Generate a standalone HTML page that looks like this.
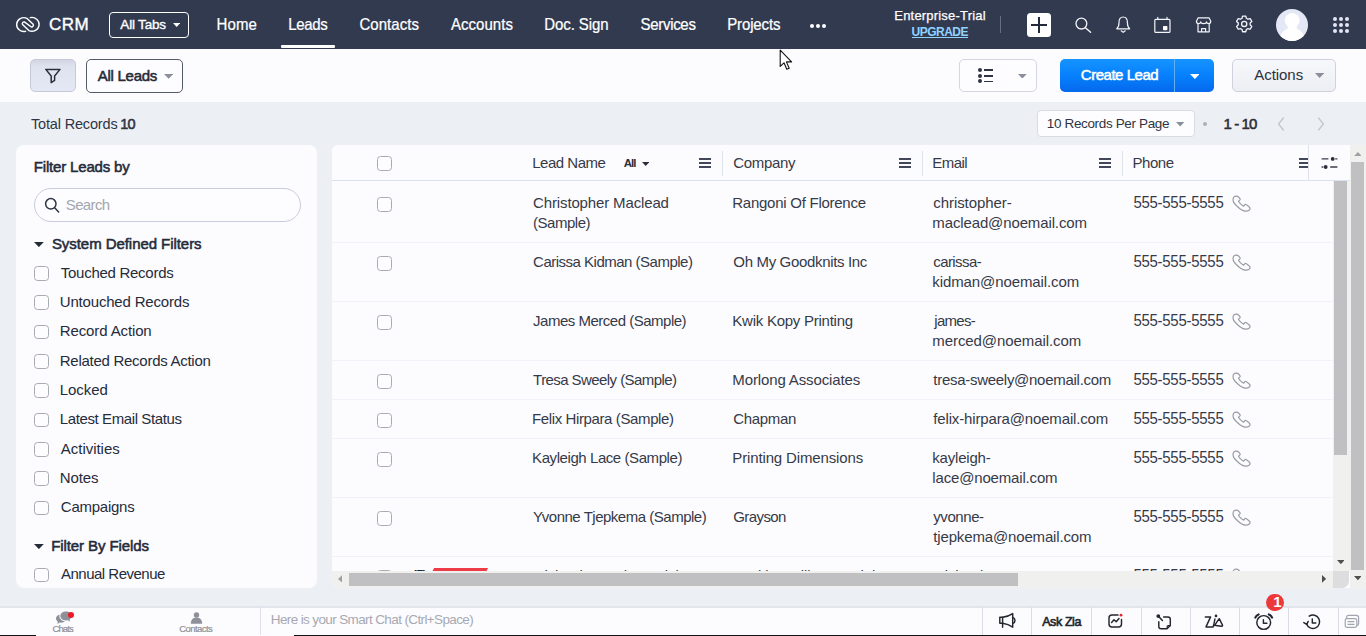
<!DOCTYPE html>
<html lang="en">
<head>
<meta charset="utf-8">
<title>Leads - Zoho CRM</title>
<style>
*{box-sizing:border-box;margin:0;padding:0}
html,body{width:1366px;height:636px;overflow:hidden}
body{position:relative;background:#ecf0f4;font-family:"Liberation Sans",sans-serif;color:#333845}
.a{position:absolute}
.t{position:absolute;white-space:pre;line-height:20px;font-family:"Liberation Sans",sans-serif}
.nav{left:0;top:0;width:1366px;height:49px;background:#323a4f}
.bar{left:0;top:49px;width:1366px;height:53px;background:#fcfcff}
.panel{background:#fcfcff;border-radius:8px}
.cb{position:absolute;width:14.6px;height:14.8px;border:1.5px solid #a9abb3;border-radius:3.5px;background:#fdfdff}
.hl{position:absolute;left:332px;width:1002px;height:1px;background:#f1f2f9}
.ham{position:absolute;width:12px;height:10px;border-top:2px solid #43475a;border-bottom:2px solid #43475a}
.ham:after{content:"";position:absolute;left:0;right:0;top:2px;height:2px;background:#43475a}
.sep{position:absolute;width:1px;top:151px;height:25px;background:#dfe3ea}
.bd{position:absolute;top:607px;width:1px;height:28px;background:#d9dbe6}
</style>
</head>
<body>
<div class="a nav"></div>
<svg class="a" style="left:9.2px;top:10px" width="42" height="30" viewBox="0 0 40 30" preserveAspectRatio="none" fill="none" stroke="#fff" stroke-width="1.35" stroke-linecap="round" stroke-linejoin="round"><path d="M15.8 21.3 A6.9 6.9 0 1 1 17.0 8.3 L23.0 14.2 A1.9 1.9 0 0 1 21.3 17.0 L14.6 11.9 A1.8 1.8 0 0 0 12.9 14.6 L18.9 20.6 A6.9 6.9 0 1 0 20.3 7.6"/></svg>
<span class="t" style="left:49.00px;top:14.81px;font-size:17px;color:#fff;letter-spacing:0.523px;-webkit-text-stroke:0.4px #fff;">CRM</span>
<div class="a" style="left:109px;top:12px;width:80px;height:26px;border:1.25px solid #fff;border-radius:4px"></div>
<span class="t" style="left:120.30px;top:15.22px;font-size:13.5px;color:#fff;letter-spacing:-0.174px;-webkit-text-stroke:0.35px #fff;">All Tabs</span>
<svg class="a" style="left:173px;top:23.2px" width="7.3" height="3.9" viewBox="0 0 7.3 3.9"><polygon points="0,0 7.3,0 3.65,3.9" fill="#fff"/></svg>
<span class="t" style="left:216.60px;top:14.70px;font-size:15px;color:#fff;letter-spacing:0.110px;-webkit-text-stroke:0.22px #fff;transform:scaleY(1.08);transform-origin:0 15.2px;">Home</span>
<span class="t" style="left:288.30px;top:14.70px;font-size:15px;color:#fff;letter-spacing:-0.342px;-webkit-text-stroke:0.22px #fff;transform:scaleY(1.08);transform-origin:0 15.2px;">Leads</span>
<span class="t" style="left:359.50px;top:14.70px;font-size:15px;color:#fff;letter-spacing:0.029px;-webkit-text-stroke:0.22px #fff;transform:scaleY(1.08);transform-origin:0 15.2px;">Contacts</span>
<span class="t" style="left:450.90px;top:14.70px;font-size:15px;color:#fff;letter-spacing:0.057px;-webkit-text-stroke:0.22px #fff;transform:scaleY(1.08);transform-origin:0 15.2px;">Accounts</span>
<span class="t" style="left:544.20px;top:14.70px;font-size:15px;color:#fff;letter-spacing:-0.074px;-webkit-text-stroke:0.22px #fff;transform:scaleY(1.08);transform-origin:0 15.2px;">Doc. Sign</span>
<span class="t" style="left:640.50px;top:14.70px;font-size:15px;color:#fff;letter-spacing:-0.302px;-webkit-text-stroke:0.22px #fff;transform:scaleY(1.08);transform-origin:0 15.2px;">Services</span>
<span class="t" style="left:727.20px;top:14.70px;font-size:15px;color:#fff;letter-spacing:-0.126px;-webkit-text-stroke:0.22px #fff;transform:scaleY(1.08);transform-origin:0 15.2px;">Projects</span>
<div class="a" style="left:281px;top:45px;width:54px;height:3px;background:#fff;border-radius:1px"></div>
<div class="a" style="left:810px;top:23.5px;width:4px;height:4px;border-radius:50%;background:#fff"></div>
<div class="a" style="left:816px;top:23.5px;width:4px;height:4px;border-radius:50%;background:#fff"></div>
<div class="a" style="left:822px;top:23.5px;width:4px;height:4px;border-radius:50%;background:#fff"></div>
<span class="t" style="left:894.30px;top:6.30px;font-size:13px;color:#fff;letter-spacing:0.194px;-webkit-text-stroke:0.25px #fff;">Enterprise-Trial</span>
<span class="t" style="left:911.60px;top:21.64px;font-size:12px;color:#8fd3ff;font-weight:700;letter-spacing:-0.534px;">UPGRADE</span>
<div class="a" style="left:911.5px;top:37px;width:56.5px;height:1.2px;background:#8fd3ff"></div>
<div class="a" style="left:999.5px;top:16px;width:1px;height:17px;background:#677083"></div>
<div class="a" style="left:1026.5px;top:12.5px;width:24px;height:24px;background:#fff;border-radius:3.5px"></div>
<div class="a" style="left:1030.5px;top:23.5px;width:16px;height:2px;background:#262b3b"></div><div class="a" style="left:1037.5px;top:16.5px;width:2px;height:16px;background:#262b3b"></div>
<svg class="a" style="left:0;top:0" width="1366" height="49" viewBox="0 0 1366 49" fill="none" stroke="#f4f5fa" stroke-width="1.2" stroke-linecap="round" stroke-linejoin="round"><circle cx="1081.4" cy="23.6" r="5.4" stroke-width="1.3"/><path d="M1085.4 27.8 L1090.6 32.2" stroke-width="1.4"/><path d="M1116.8 28.8 C1118.6 27.2 1119 25.6 1119 22.4 C1119 19.2 1120.6 17 1123.2 17 C1125.8 17 1127.4 19.2 1127.4 22.4 C1127.4 25.6 1127.8 27.2 1129.6 28.8 Z"/><path d="M1121.2 30.8 L1123.2 32.4 L1125.2 30.8"/><rect x="1154.8" y="19.4" width="15.2" height="13" rx="1"/><path d="M1157.8 17.4 V19.2 M1167 17.4 V19.2"/><rect x="1163" y="26" width="4.4" height="4.2" rx="0.8" fill="#fff" stroke="none"/><path d="M1198 24.4 V31.8 H1209.2 V24.4"/><path d="M1198.2 17.8 H1209 L1210.8 21.2 C1210.8 22.6 1209.8 23.6 1208.6 23.6 C1207.4 23.6 1206.5 22.8 1206.5 21.8 C1206.5 22.8 1205 23.6 1203.6 23.6 C1202.2 23.6 1200.7 22.8 1200.7 21.8 C1200.7 22.8 1199.8 23.6 1198.6 23.6 C1197.4 23.6 1196.4 22.6 1196.4 21.2 Z"/><path d="M1201.6 31.6 V28.6 H1205.6 V31.6"/><path d="M1242.54 16.07 L1245.86 16.07 L1246.35 18.30 L1247.98 19.24 L1250.15 18.55 L1251.81 21.43 L1250.13 22.96 L1250.13 24.84 L1251.81 26.37 L1250.15 29.25 L1247.98 28.56 L1246.35 29.50 L1245.86 31.73 L1242.54 31.73 L1242.05 29.50 L1240.42 28.56 L1238.25 29.25 L1236.59 26.37 L1238.27 24.84 L1238.27 22.96 L1236.59 21.43 L1238.25 18.55 L1240.42 19.24 L1242.05 18.30 Z" stroke-width="1.3"/><circle cx="1244.2" cy="23.9" r="2.6" stroke-width="1.3"/></svg>
<svg class="a" style="left:1276px;top:9px" width="32" height="32" viewBox="0 0 32 32"><defs><clipPath id="av"><circle cx="16" cy="16" r="16"/></clipPath></defs><circle cx="16" cy="16" r="16" fill="#e4e7f5"/><g clip-path="url(#av)" fill="#fff"><circle cx="16.2" cy="11.4" r="7.4"/><path d="M11.6 15 H20.8 V20 C25.6 21.4 28.8 25 28.8 33 H3.6 C3.6 25 6.8 21.4 11.6 20 Z"/></g></svg>
<div class="a" style="left:1332.8px;top:17px;width:4.2px;height:4.2px;border-radius:50%;background:#e4e6f6"></div>
<div class="a" style="left:1338.8999999999999px;top:17px;width:4.2px;height:4.2px;border-radius:50%;background:#e4e6f6"></div>
<div class="a" style="left:1345.0px;top:17px;width:4.2px;height:4.2px;border-radius:50%;background:#e4e6f6"></div>
<div class="a" style="left:1332.8px;top:23px;width:4.2px;height:4.2px;border-radius:50%;background:#e4e6f6"></div>
<div class="a" style="left:1338.8999999999999px;top:23px;width:4.2px;height:4.2px;border-radius:50%;background:#e4e6f6"></div>
<div class="a" style="left:1345.0px;top:23px;width:4.2px;height:4.2px;border-radius:50%;background:#e4e6f6"></div>
<div class="a" style="left:1332.8px;top:29px;width:4.2px;height:4.2px;border-radius:50%;background:#e4e6f6"></div>
<div class="a" style="left:1338.8999999999999px;top:29px;width:4.2px;height:4.2px;border-radius:50%;background:#e4e6f6"></div>
<div class="a" style="left:1345.0px;top:29px;width:4.2px;height:4.2px;border-radius:50%;background:#e4e6f6"></div>
<div class="a bar"></div>
<div class="a" style="left:30px;top:59px;width:46px;height:33px;background:linear-gradient(#d3d6e2,#dfe2ef 22%,#e4e7f4);border:1px solid #c6cad8;border-radius:5px"></div>
<svg class="a" style="left:44px;top:68px" width="18" height="16" viewBox="0 0 18 16" fill="none" stroke="#2a2e3a" stroke-width="1.5" stroke-linejoin="round"><path d="M1.8 1.4 H16 L10.6 8 V12.4 L7.2 14.6 V8 Z"/></svg>
<div class="a" style="left:86px;top:59px;width:97px;height:34px;background:#fdfdff;border:1px solid #555a6b;border-radius:5px"></div>
<span class="t" style="left:97.80px;top:65.50px;font-size:15px;color:#272b38;letter-spacing:-0.276px;-webkit-text-stroke:0.55px #272b38;">All Leads</span>
<svg class="a" style="left:163.9px;top:74.1px" width="9.3" height="4.7" viewBox="0 0 9.3 4.7"><polygon points="0,0 9.3,0 4.65,4.7" fill="#8b8f9c"/></svg>
<div class="a" style="left:959px;top:59px;width:78px;height:33px;background:#fdfdff;border:1px solid #d3d6e0;border-radius:5px"></div>
<div class="a" style="left:978px;top:68.10px;width:4px;height:4px;border-radius:50%;background:#2f3444"></div><div class="a" style="left:984px;top:69.30px;width:9.2px;height:1.6px;background:#2f3444"></div>
<div class="a" style="left:978px;top:73.75px;width:4px;height:4px;border-radius:50%;background:#2f3444"></div><div class="a" style="left:984px;top:74.95px;width:9.2px;height:1.6px;background:#2f3444"></div>
<div class="a" style="left:978px;top:79.40px;width:4px;height:4px;border-radius:50%;background:#2f3444"></div><div class="a" style="left:984px;top:80.60px;width:9.2px;height:1.6px;background:#2f3444"></div>
<svg class="a" style="left:1018.3px;top:73.9px" width="8.7" height="4.6" viewBox="0 0 8.7 4.6"><polygon points="0,0 8.7,0 4.35,4.6" fill="#8b8f9c"/></svg>
<div class="a" style="left:1060px;top:59px;width:154px;height:33px;background:linear-gradient(#1694ff,#0680fc 50%,#0569ec);border-radius:5px"></div>
<div class="a" style="left:1174px;top:59px;width:1px;height:33px;background:#5fb0f5"></div>
<span class="t" style="left:1080.80px;top:64.80px;font-size:15px;color:#fff;letter-spacing:-0.472px;-webkit-text-stroke:0.5px #fff;">Create Lead</span>
<svg class="a" style="left:1189.6px;top:73.9px" width="9.7" height="5.0" viewBox="0 0 9.7 5.0"><polygon points="0,0 9.7,0 4.85,5.0" fill="#fff"/></svg>
<div class="a" style="left:1232px;top:59px;width:104px;height:33px;background:linear-gradient(#f7f8fb,#eceef4);border:1px solid #cfd2dc;border-radius:5px"></div>
<span class="t" style="left:1254.20px;top:64.70px;font-size:15px;color:#2c303d;letter-spacing:-0.032px;">Actions</span>
<svg class="a" style="left:1314.7px;top:72.9px" width="9.3" height="5.0" viewBox="0 0 9.3 5.0"><polygon points="0,0 9.3,0 4.65,5.0" fill="#8b8f9c"/></svg>
<span class="t" style="left:31.00px;top:113.68px;font-size:14.5px;color:#2f3444;letter-spacing:-0.167px;">Total Records</span>
<span class="t" style="left:120.20px;top:113.68px;font-size:14.5px;color:#2f3444;letter-spacing:-0.764px;-webkit-text-stroke:0.55px #2f3444;">10</span>
<div class="a" style="left:1036.5px;top:110px;width:158px;height:27px;background:#fdfdff;border:1px solid #d8dbe4;border-radius:4px"></div>
<span class="t" style="left:1046.80px;top:113.52px;font-size:13.5px;color:#2f3444;letter-spacing:-0.354px;">10 Records Per Page</span>
<svg class="a" style="left:1176.4px;top:122.0px" width="8.4" height="4.5" viewBox="0 0 8.4 4.5"><polygon points="0,0 8.4,0 4.2,4.5" fill="#8b8f9c"/></svg>
<div class="a" style="left:1203.2px;top:122.2px;width:4px;height:4px;border-radius:50%;background:#adb0ba"></div>
<span class="t" style="left:1223.40px;top:113.70px;font-size:15px;color:#2a2e3a;letter-spacing:-0.883px;-webkit-text-stroke:0.55px #2a2e3a;">1 - 10</span>
<svg class="a" style="left:1276px;top:116px" width="10" height="16" viewBox="0 0 10 16" fill="none" stroke="#c4c7cf" stroke-width="1.4" stroke-linecap="round" stroke-linejoin="round"><path d="M7.4 2 L2.6 8 L7.4 14"/></svg>
<svg class="a" style="left:1316px;top:116px" width="10" height="16" viewBox="0 0 10 16" fill="none" stroke="#c4c7cf" stroke-width="1.4" stroke-linecap="round" stroke-linejoin="round"><path d="M2.6 2 L7.4 8 L2.6 14"/></svg>
<div class="a panel" style="left:16px;top:145px;width:300.5px;height:442.5px"></div>
<span class="t" style="left:33.80px;top:156.80px;font-size:15px;color:#262b3a;letter-spacing:-0.170px;-webkit-text-stroke:0.55px #262b3a;">Filter Leads by</span>
<div class="a" style="left:34px;top:188px;width:267px;height:34px;border:1px solid #c9ccdc;border-radius:17px;background:#fdfdff"></div>
<svg class="a" style="left:43.2px;top:195.9px" width="18" height="18" viewBox="0 0 18 18" fill="none" stroke="#2f3444" stroke-width="1.5" stroke-linecap="round"><circle cx="7.8" cy="7.8" r="5.2"/><path d="M11.7 11.8 L15.6 15.9"/></svg>
<span class="t" style="left:65.80px;top:194.90px;font-size:15px;color:#a4a6ae;letter-spacing:-0.637px;">Search</span>
<svg class="a" style="left:34.1px;top:242.1px" width="9.8" height="5.1" viewBox="0 0 9.8 5.1"><polygon points="0,0 9.8,0 4.9,5.1" fill="#262b3a"/></svg>
<span class="t" style="left:51.90px;top:233.90px;font-size:15px;color:#262b3a;letter-spacing:-0.056px;-webkit-text-stroke:0.55px #262b3a;">System Defined Filters</span>
<div class="cb" style="left:34px;top:266.0px"></div>
<span class="t" style="left:60.80px;top:262.80px;font-size:15px;color:#262b3a;letter-spacing:-0.274px;">Touched Records</span>
<div class="cb" style="left:34px;top:295.3px"></div>
<span class="t" style="left:59.80px;top:292.13px;font-size:15px;color:#262b3a;letter-spacing:-0.186px;">Untouched Records</span>
<div class="cb" style="left:34px;top:324.7px"></div>
<span class="t" style="left:59.80px;top:321.46px;font-size:15px;color:#262b3a;letter-spacing:-0.122px;">Record Action</span>
<div class="cb" style="left:34px;top:354.0px"></div>
<span class="t" style="left:59.80px;top:350.79px;font-size:15px;color:#262b3a;letter-spacing:-0.273px;">Related Records Action</span>
<div class="cb" style="left:34px;top:383.3px"></div>
<span class="t" style="left:59.80px;top:380.12px;font-size:15px;color:#262b3a;letter-spacing:-0.065px;">Locked</span>
<div class="cb" style="left:34px;top:412.6px"></div>
<span class="t" style="left:59.80px;top:409.45px;font-size:15px;color:#262b3a;letter-spacing:-0.396px;">Latest Email Status</span>
<div class="cb" style="left:34px;top:442.0px"></div>
<span class="t" style="left:60.80px;top:438.78px;font-size:15px;color:#262b3a;letter-spacing:-0.031px;">Activities</span>
<div class="cb" style="left:34px;top:471.3px"></div>
<span class="t" style="left:59.80px;top:468.11px;font-size:15px;color:#262b3a;letter-spacing:-0.121px;">Notes</span>
<div class="cb" style="left:34px;top:500.6px"></div>
<span class="t" style="left:60.80px;top:497.44px;font-size:15px;color:#262b3a;letter-spacing:-0.246px;">Campaigns</span>
<svg class="a" style="left:34.1px;top:543.8px" width="9.8" height="5.1" viewBox="0 0 9.8 5.1"><polygon points="0,0 9.8,0 4.9,5.1" fill="#262b3a"/></svg>
<span class="t" style="left:51.20px;top:535.70px;font-size:15px;color:#262b3a;letter-spacing:-0.092px;-webkit-text-stroke:0.55px #262b3a;">Filter By Fields</span>
<div class="cb" style="left:34px;top:567.6px"></div>
<span class="t" style="left:61.00px;top:564.10px;font-size:15px;color:#262b3a;letter-spacing:-0.506px;">Annual Revenue</span>
<div class="a panel" style="left:332px;top:145px;width:1018px;height:442.5px;border-radius:6px 0 0 8px"></div>
<div class="a" style="left:332px;top:180px;width:1018px;height:1.4px;background:#d5e3f3"></div>
<div class="cb" style="left:377px;top:156px"></div>
<span class="t" style="left:532.20px;top:153.20px;font-size:15px;color:#363a47;letter-spacing:-0.488px;">Lead Name</span>
<span class="t" style="left:623.80px;top:153.42px;font-size:11.5px;color:#2a2e3a;font-weight:700;letter-spacing:-1.050px;">All</span>
<svg class="a" style="left:641.6px;top:161.6px" width="7.4" height="4.0" viewBox="0 0 7.4 4.0"><polygon points="0,0 7.4,0 3.7,4.0" fill="#2a2e3a"/></svg>
<span class="t" style="left:733.30px;top:153.20px;font-size:15px;color:#363a47;letter-spacing:-0.316px;">Company</span>
<span class="t" style="left:932.30px;top:153.20px;font-size:15px;color:#363a47;letter-spacing:-0.544px;">Email</span>
<span class="t" style="left:1132.40px;top:153.20px;font-size:15px;color:#363a47;letter-spacing:-0.408px;">Phone</span>
<div class="ham" style="left:699px;top:158px"></div>
<div class="ham" style="left:899px;top:158px"></div>
<div class="ham" style="left:1099px;top:158px"></div>
<div class="ham" style="left:1299px;top:158px;width:9px"></div>
<div class="sep" style="left:722px"></div>
<div class="sep" style="left:922px"></div>
<div class="sep" style="left:1122px"></div>
<div class="a" style="left:1308px;top:145px;width:1px;height:36px;background:#dfe2ea"></div>
<svg class="a" style="left:1320px;top:155px" width="19" height="16" viewBox="0 0 19 16" fill="#2a2e3a" stroke="#3a3e4c" stroke-width="1.3" stroke-linecap="butt"><path d="M1.6 3.9 H8.4 M15.2 3.9 H17.4 M1.6 12 H3.4 M10.2 12 H17.4" fill="none"/><circle cx="12.7" cy="3.9" r="1.9" stroke="none"/><circle cx="5.7" cy="12" r="1.9" stroke="none"/></svg>
<div class="a" style="left:0;top:0;width:1334px;height:571px;overflow:hidden">
<div class="cb" style="left:377px;top:196.8px"></div>
<span class="t" style="left:533.10px;top:192.90px;font-size:15px;color:#363a47;letter-spacing:-0.142px;">Christopher Maclead</span>
<span class="t" style="left:533.10px;top:212.90px;font-size:15px;color:#363a47;letter-spacing:-0.493px;">(Sample)</span>
<span class="t" style="left:732.30px;top:192.90px;font-size:15px;color:#363a47;letter-spacing:-0.259px;">Rangoni Of Florence</span>
<span class="t" style="left:933.30px;top:192.90px;font-size:15px;color:#363a47;letter-spacing:-0.073px;">christopher-</span>
<span class="t" style="left:932.30px;top:212.90px;font-size:15px;color:#363a47;letter-spacing:-0.126px;">maclead@noemail.com</span>
<span class="t" style="left:1133.40px;top:193.00px;font-size:15px;color:#363a47;letter-spacing:-0.279px;transform:scaleY(1.07);transform-origin:0 15.2px;">555-555-5555</span>
<svg class="a" style="left:1231.6px;top:195.1px" width="19.2" height="17.3" viewBox="0 0 20 18" fill="none" stroke="#979aa3" stroke-width="1.25" stroke-linejoin="round" stroke-linecap="round"><path d="M4.2 1.1 C2.8 1.1 1.1 2.6 1.1 4.4 C1.1 6 1.4 7 1.8 7.7 C3 9.8 4.6 11.2 6.1 12.5 C7.4 13.6 8.6 14.6 9.9 15.3 C11 16 12.4 16.5 13.6 16.7 C15 16.9 16.4 16.8 17.4 16.2 C18.4 15.6 19 14.8 18.8 13.9 C18.7 13.2 18.1 12.5 17.4 12 L14.9 10 C14.3 9.5 13.6 9.6 13.2 10.2 L12.2 11.6 C10.9 10.9 9.8 10.1 8.9 9.2 C8 8.3 7.2 7.3 6.8 6.4 L8.1 5.3 C8.6 4.9 8.7 4.3 8.3 3.7 L7 2.1 C6.3 1.3 5.2 1.1 4.2 1.1 Z"/></svg>
<div class="hl" style="top:242px"></div>
<div class="cb" style="left:377px;top:255.8px"></div>
<span class="t" style="left:533.10px;top:251.90px;font-size:15px;color:#363a47;letter-spacing:-0.504px;">Carissa Kidman (Sample)</span>
<span class="t" style="left:733.30px;top:251.90px;font-size:15px;color:#363a47;letter-spacing:-0.336px;">Oh My Goodknits Inc</span>
<span class="t" style="left:933.30px;top:251.90px;font-size:15px;color:#363a47;letter-spacing:-0.587px;">carissa-</span>
<span class="t" style="left:932.30px;top:271.90px;font-size:15px;color:#363a47;letter-spacing:-0.101px;">kidman@noemail.com</span>
<span class="t" style="left:1133.40px;top:252.00px;font-size:15px;color:#363a47;letter-spacing:-0.279px;transform:scaleY(1.07);transform-origin:0 15.2px;">555-555-5555</span>
<svg class="a" style="left:1231.6px;top:254.1px" width="19.2" height="17.3" viewBox="0 0 20 18" fill="none" stroke="#979aa3" stroke-width="1.25" stroke-linejoin="round" stroke-linecap="round"><path d="M4.2 1.1 C2.8 1.1 1.1 2.6 1.1 4.4 C1.1 6 1.4 7 1.8 7.7 C3 9.8 4.6 11.2 6.1 12.5 C7.4 13.6 8.6 14.6 9.9 15.3 C11 16 12.4 16.5 13.6 16.7 C15 16.9 16.4 16.8 17.4 16.2 C18.4 15.6 19 14.8 18.8 13.9 C18.7 13.2 18.1 12.5 17.4 12 L14.9 10 C14.3 9.5 13.6 9.6 13.2 10.2 L12.2 11.6 C10.9 10.9 9.8 10.1 8.9 9.2 C8 8.3 7.2 7.3 6.8 6.4 L8.1 5.3 C8.6 4.9 8.7 4.3 8.3 3.7 L7 2.1 C6.3 1.3 5.2 1.1 4.2 1.1 Z"/></svg>
<div class="hl" style="top:301px"></div>
<div class="cb" style="left:377px;top:314.8px"></div>
<span class="t" style="left:533.10px;top:310.90px;font-size:15px;color:#363a47;letter-spacing:-0.494px;">James Merced (Sample)</span>
<span class="t" style="left:732.30px;top:310.90px;font-size:15px;color:#363a47;letter-spacing:-0.248px;">Kwik Kopy Printing</span>
<span class="t" style="left:934.30px;top:310.90px;font-size:15px;color:#363a47;letter-spacing:-0.722px;">james-</span>
<span class="t" style="left:932.30px;top:330.90px;font-size:15px;color:#363a47;letter-spacing:-0.075px;">merced@noemail.com</span>
<span class="t" style="left:1133.40px;top:311.00px;font-size:15px;color:#363a47;letter-spacing:-0.279px;transform:scaleY(1.07);transform-origin:0 15.2px;">555-555-5555</span>
<svg class="a" style="left:1231.6px;top:313.1px" width="19.2" height="17.3" viewBox="0 0 20 18" fill="none" stroke="#979aa3" stroke-width="1.25" stroke-linejoin="round" stroke-linecap="round"><path d="M4.2 1.1 C2.8 1.1 1.1 2.6 1.1 4.4 C1.1 6 1.4 7 1.8 7.7 C3 9.8 4.6 11.2 6.1 12.5 C7.4 13.6 8.6 14.6 9.9 15.3 C11 16 12.4 16.5 13.6 16.7 C15 16.9 16.4 16.8 17.4 16.2 C18.4 15.6 19 14.8 18.8 13.9 C18.7 13.2 18.1 12.5 17.4 12 L14.9 10 C14.3 9.5 13.6 9.6 13.2 10.2 L12.2 11.6 C10.9 10.9 9.8 10.1 8.9 9.2 C8 8.3 7.2 7.3 6.8 6.4 L8.1 5.3 C8.6 4.9 8.7 4.3 8.3 3.7 L7 2.1 C6.3 1.3 5.2 1.1 4.2 1.1 Z"/></svg>
<div class="hl" style="top:360px"></div>
<div class="cb" style="left:377px;top:373.8px"></div>
<span class="t" style="left:533.10px;top:369.90px;font-size:15px;color:#363a47;letter-spacing:-0.571px;">Tresa Sweely (Sample)</span>
<span class="t" style="left:732.30px;top:369.90px;font-size:15px;color:#363a47;letter-spacing:-0.123px;">Morlong Associates</span>
<span class="t" style="left:933.30px;top:369.90px;font-size:15px;color:#363a47;letter-spacing:-0.281px;">tresa-sweely@noemail.com</span>
<span class="t" style="left:1133.40px;top:370.00px;font-size:15px;color:#363a47;letter-spacing:-0.279px;transform:scaleY(1.07);transform-origin:0 15.2px;">555-555-5555</span>
<svg class="a" style="left:1231.6px;top:372.1px" width="19.2" height="17.3" viewBox="0 0 20 18" fill="none" stroke="#979aa3" stroke-width="1.25" stroke-linejoin="round" stroke-linecap="round"><path d="M4.2 1.1 C2.8 1.1 1.1 2.6 1.1 4.4 C1.1 6 1.4 7 1.8 7.7 C3 9.8 4.6 11.2 6.1 12.5 C7.4 13.6 8.6 14.6 9.9 15.3 C11 16 12.4 16.5 13.6 16.7 C15 16.9 16.4 16.8 17.4 16.2 C18.4 15.6 19 14.8 18.8 13.9 C18.7 13.2 18.1 12.5 17.4 12 L14.9 10 C14.3 9.5 13.6 9.6 13.2 10.2 L12.2 11.6 C10.9 10.9 9.8 10.1 8.9 9.2 C8 8.3 7.2 7.3 6.8 6.4 L8.1 5.3 C8.6 4.9 8.7 4.3 8.3 3.7 L7 2.1 C6.3 1.3 5.2 1.1 4.2 1.1 Z"/></svg>
<div class="hl" style="top:399px"></div>
<div class="cb" style="left:377px;top:412.8px"></div>
<span class="t" style="left:532.10px;top:408.90px;font-size:15px;color:#363a47;letter-spacing:-0.388px;">Felix Hirpara (Sample)</span>
<span class="t" style="left:733.30px;top:408.90px;font-size:15px;color:#363a47;letter-spacing:-0.333px;">Chapman</span>
<span class="t" style="left:933.30px;top:408.90px;font-size:15px;color:#363a47;letter-spacing:-0.151px;">felix-hirpara@noemail.com</span>
<span class="t" style="left:1133.40px;top:409.00px;font-size:15px;color:#363a47;letter-spacing:-0.279px;transform:scaleY(1.07);transform-origin:0 15.2px;">555-555-5555</span>
<svg class="a" style="left:1231.6px;top:411.1px" width="19.2" height="17.3" viewBox="0 0 20 18" fill="none" stroke="#979aa3" stroke-width="1.25" stroke-linejoin="round" stroke-linecap="round"><path d="M4.2 1.1 C2.8 1.1 1.1 2.6 1.1 4.4 C1.1 6 1.4 7 1.8 7.7 C3 9.8 4.6 11.2 6.1 12.5 C7.4 13.6 8.6 14.6 9.9 15.3 C11 16 12.4 16.5 13.6 16.7 C15 16.9 16.4 16.8 17.4 16.2 C18.4 15.6 19 14.8 18.8 13.9 C18.7 13.2 18.1 12.5 17.4 12 L14.9 10 C14.3 9.5 13.6 9.6 13.2 10.2 L12.2 11.6 C10.9 10.9 9.8 10.1 8.9 9.2 C8 8.3 7.2 7.3 6.8 6.4 L8.1 5.3 C8.6 4.9 8.7 4.3 8.3 3.7 L7 2.1 C6.3 1.3 5.2 1.1 4.2 1.1 Z"/></svg>
<div class="hl" style="top:438px"></div>
<div class="cb" style="left:377px;top:451.8px"></div>
<span class="t" style="left:532.10px;top:447.90px;font-size:15px;color:#363a47;letter-spacing:-0.426px;">Kayleigh Lace (Sample)</span>
<span class="t" style="left:732.30px;top:447.90px;font-size:15px;color:#363a47;letter-spacing:-0.138px;">Printing Dimensions</span>
<span class="t" style="left:932.30px;top:447.90px;font-size:15px;color:#363a47;letter-spacing:-0.204px;">kayleigh-</span>
<span class="t" style="left:932.30px;top:467.90px;font-size:15px;color:#363a47;letter-spacing:-0.166px;">lace@noemail.com</span>
<span class="t" style="left:1133.40px;top:448.00px;font-size:15px;color:#363a47;letter-spacing:-0.279px;transform:scaleY(1.07);transform-origin:0 15.2px;">555-555-5555</span>
<svg class="a" style="left:1231.6px;top:450.1px" width="19.2" height="17.3" viewBox="0 0 20 18" fill="none" stroke="#979aa3" stroke-width="1.25" stroke-linejoin="round" stroke-linecap="round"><path d="M4.2 1.1 C2.8 1.1 1.1 2.6 1.1 4.4 C1.1 6 1.4 7 1.8 7.7 C3 9.8 4.6 11.2 6.1 12.5 C7.4 13.6 8.6 14.6 9.9 15.3 C11 16 12.4 16.5 13.6 16.7 C15 16.9 16.4 16.8 17.4 16.2 C18.4 15.6 19 14.8 18.8 13.9 C18.7 13.2 18.1 12.5 17.4 12 L14.9 10 C14.3 9.5 13.6 9.6 13.2 10.2 L12.2 11.6 C10.9 10.9 9.8 10.1 8.9 9.2 C8 8.3 7.2 7.3 6.8 6.4 L8.1 5.3 C8.6 4.9 8.7 4.3 8.3 3.7 L7 2.1 C6.3 1.3 5.2 1.1 4.2 1.1 Z"/></svg>
<div class="hl" style="top:497px"></div>
<div class="cb" style="left:377px;top:510.8px"></div>
<span class="t" style="left:533.10px;top:506.90px;font-size:15px;color:#363a47;letter-spacing:-0.487px;">Yvonne Tjepkema (Sample)</span>
<span class="t" style="left:733.30px;top:506.90px;font-size:15px;color:#363a47;letter-spacing:-0.591px;">Grayson</span>
<span class="t" style="left:933.30px;top:506.90px;font-size:15px;color:#363a47;letter-spacing:-0.428px;">yvonne-</span>
<span class="t" style="left:933.30px;top:526.90px;font-size:15px;color:#363a47;letter-spacing:-0.154px;">tjepkema@noemail.com</span>
<span class="t" style="left:1133.40px;top:507.00px;font-size:15px;color:#363a47;letter-spacing:-0.279px;transform:scaleY(1.07);transform-origin:0 15.2px;">555-555-5555</span>
<svg class="a" style="left:1231.6px;top:509.1px" width="19.2" height="17.3" viewBox="0 0 20 18" fill="none" stroke="#979aa3" stroke-width="1.25" stroke-linejoin="round" stroke-linecap="round"><path d="M4.2 1.1 C2.8 1.1 1.1 2.6 1.1 4.4 C1.1 6 1.4 7 1.8 7.7 C3 9.8 4.6 11.2 6.1 12.5 C7.4 13.6 8.6 14.6 9.9 15.3 C11 16 12.4 16.5 13.6 16.7 C15 16.9 16.4 16.8 17.4 16.2 C18.4 15.6 19 14.8 18.8 13.9 C18.7 13.2 18.1 12.5 17.4 12 L14.9 10 C14.3 9.5 13.6 9.6 13.2 10.2 L12.2 11.6 C10.9 10.9 9.8 10.1 8.9 9.2 C8 8.3 7.2 7.3 6.8 6.4 L8.1 5.3 C8.6 4.9 8.7 4.3 8.3 3.7 L7 2.1 C6.3 1.3 5.2 1.1 4.2 1.1 Z"/></svg>
<div class="hl" style="top:556px"></div>
<div class="cb" style="left:377px;top:569.8px"></div>
<span class="t" style="left:532.10px;top:565.90px;font-size:15px;color:#363a47;letter-spacing:-0.178px;">Michael Ruta (Sample)</span>
<span class="t" style="left:732.30px;top:565.90px;font-size:15px;color:#363a47;letter-spacing:-0.080px;">Buckley Miller &amp; Wright</span>
<span class="t" style="left:932.30px;top:565.90px;font-size:15px;color:#363a47;letter-spacing:-0.098px;">michael-</span>
<span class="t" style="left:932.30px;top:585.90px;font-size:15px;color:#363a47;letter-spacing:-0.308px;">ruta@noemail.com</span>
<span class="t" style="left:1133.40px;top:566.00px;font-size:15px;color:#363a47;letter-spacing:-0.279px;transform:scaleY(1.07);transform-origin:0 15.2px;">555-555-5555</span>
<svg class="a" style="left:1231.6px;top:568.1px" width="19.2" height="17.3" viewBox="0 0 20 18" fill="none" stroke="#979aa3" stroke-width="1.25" stroke-linejoin="round" stroke-linecap="round"><path d="M4.2 1.1 C2.8 1.1 1.1 2.6 1.1 4.4 C1.1 6 1.4 7 1.8 7.7 C3 9.8 4.6 11.2 6.1 12.5 C7.4 13.6 8.6 14.6 9.9 15.3 C11 16 12.4 16.5 13.6 16.7 C15 16.9 16.4 16.8 17.4 16.2 C18.4 15.6 19 14.8 18.8 13.9 C18.7 13.2 18.1 12.5 17.4 12 L14.9 10 C14.3 9.5 13.6 9.6 13.2 10.2 L12.2 11.6 C10.9 10.9 9.8 10.1 8.9 9.2 C8 8.3 7.2 7.3 6.8 6.4 L8.1 5.3 C8.6 4.9 8.7 4.3 8.3 3.7 L7 2.1 C6.3 1.3 5.2 1.1 4.2 1.1 Z"/></svg>
<div class="a" style="left:433.8px;top:568.1px;width:54.2px;height:18px;background:#ee3b48;transform:skewX(-25deg);transform-origin:0 0"></div>
<span class="t" style="left:412.60px;top:565.10px;font-size:13px;color:#222;font-weight:700;letter-spacing:-0.780px;">(5)</span>
</div>
<div class="a" style="left:1333px;top:181px;width:17px;height:390px;background:#f0f0ee"></div>
<div class="a" style="left:1334px;top:181px;width:13px;height:274px;background:#c0c0c3"></div>
<svg class="a" style="left:1336.6px;top:560px" width="7.8" height="4.2" viewBox="0 0 7.8 4.2"><polygon points="0,0 7.8,0 3.9,4.2" fill="#4f4f52"/></svg>
<div class="a" style="left:332px;top:571px;width:1001px;height:16.5px;background:#f0f0ee;border-radius:0 0 0 8px"></div>
<div class="a" style="left:349px;top:572.8px;width:669px;height:13.1px;background:#c0c0c3"></div>
<svg class="a" style="left:337.6px;top:575.4px" width="4.2" height="7.8" viewBox="0 0 4.2 7.8"><polygon points="4.2,0 4.2,7.8 0,3.9" fill="#a0a0a4"/></svg>
<svg class="a" style="left:1321.8px;top:575.2px" width="4.2" height="7.8" viewBox="0 0 4.2 7.8"><polygon points="0,0 0,7.8 4.2,3.9" fill="#4f4f52"/></svg>
<div class="a" style="left:1333px;top:571px;width:16px;height:16.5px;background:#dddde0;border-radius:0 0 7px 0"></div>
<div class="a" style="left:1350px;top:145px;width:16px;height:442.5px;background:#f0f0ee"></div>
<div class="a" style="left:1351px;top:162px;width:13px;height:408px;background:#c0c0c3"></div>
<svg class="a" style="left:1353.6px;top:151.8px" width="7.8" height="4.2" viewBox="0 0 7.8 4.2"><polygon points="0,4.2 7.8,4.2 3.9,0" fill="#a0a0a4"/></svg>
<svg class="a" style="left:1353.7px;top:576.4px" width="7.8" height="4.2" viewBox="0 0 7.8 4.2"><polygon points="0,0 7.8,0 3.9,4.2" fill="#4f4f52"/></svg>
<div class="a" style="left:0;top:605.5px;width:1366px;height:31px;background:#fcfcff;border-top:2px solid #e2e5ec"></div>
<div class="a" style="left:0;top:635px;width:36px;height:1px;background:#111"></div><div class="a" style="left:294px;top:635px;width:1072px;height:1px;background:#111"></div>
<svg class="a" style="left:55px;top:611px" width="18" height="14" viewBox="0 0 18 14" fill="#8e9099"><path d="M11 0.6 C14.4 0.6 16.6 2.6 16.6 5 C16.6 6.4 15.8 7.6 14.6 8.4 L15 10.6 L12.6 9.3 C12.1 9.4 11.6 9.4 11 9.4 C7.6 9.4 5.4 7.4 5.4 5 C5.4 2.6 7.6 0.6 11 0.6 Z"/><path d="M4.6 3.6 C2.4 4.2 1 5.8 1 7.6 C1 8.9 1.7 10 2.8 10.7 L2.4 13 L4.8 11.6 C5.6 11.8 6.6 11.8 7.6 11.6 C8.6 11.4 9.4 10.9 10 10.3 C6.8 10 4.4 7.8 4.4 5 C4.4 4.5 4.5 4 4.6 3.6 Z"/></svg>
<div class="a" style="left:68.4px;top:612px;width:6px;height:6px;border-radius:50%;background:#f01822"></div>
<span class="t" style="left:52.50px;top:618.71px;font-size:9.5px;color:#8e9099;letter-spacing:-0.892px;-webkit-text-stroke:0.2px #8e9099;">Chats</span>
<svg class="a" style="left:190px;top:612px" width="13" height="12" viewBox="0 0 13 12" fill="#8e9099"><circle cx="6.5" cy="2.9" r="2.7"/><path d="M0.8 11.8 C0.8 7.6 3.2 5.6 6.5 5.6 C9.8 5.6 12.2 7.6 12.2 11.8 Z"/></svg>
<span class="t" style="left:179.30px;top:618.71px;font-size:9.5px;color:#8e9099;letter-spacing:-0.563px;-webkit-text-stroke:0.2px #8e9099;">Contacts</span>
<div class="a" style="left:260px;top:607px;width:1px;height:28px;background:#dfe1ee"></div>
<span class="t" style="left:270.80px;top:610.32px;font-size:13.5px;color:#a7a9b2;letter-spacing:-0.623px;">Here is your Smart Chat (Ctrl+Space)</span>
<div class="bd" style="left:982px"></div>
<div class="bd" style="left:1031px"></div>
<div class="bd" style="left:1091px"></div>
<div class="bd" style="left:1140.5px"></div>
<div class="bd" style="left:1189.5px"></div>
<div class="bd" style="left:1238.5px"></div>
<div class="bd" style="left:1287.5px"></div>
<div class="bd" style="left:1337.5px"></div>
<span class="t" style="left:1042.20px;top:611.77px;font-size:12.5px;color:#23262f;letter-spacing:-0.404px;-webkit-text-stroke:0.6px #23262f;">Ask Zia</span>
<div class="a" style="left:1266.2px;top:593.8px;width:17.8px;height:17.6px;border-radius:50%;background:#ec3838"></div>
<span class="t" style="left:1273.30px;top:591.90px;font-size:15px;color:#fff;font-weight:700;">1</span>
<svg class="a" style="left:0;top:590px" width="1366" height="46" viewBox="0 590 1366 46" fill="none" stroke="#23262f" stroke-width="1.45" stroke-linecap="round" stroke-linejoin="round"><path d="M999.8 617.3 H1002.6 C1006.6 616.8 1010 615.4 1012.7 613.6 V627.2 C1010 625.2 1006.6 623.8 1002.6 623.3 H999.8 Z"/><path d="M1002.6 617.3 V627.2"/><path d="M1012.9 617.4 A3.2 3.2 0 0 1 1012.9 623.4"/><path d="M1118 614.9 H1112 C1110.2 614.9 1109 616.1 1109 617.9 V623.9 C1109 625.7 1110.2 626.9 1112 626.9 H1118.5 C1120.3 626.9 1121.5 625.7 1121.5 623.9 V619.4"/><path d="M1111.6 622.4 L1114 619.8 L1116.2 621.8 L1119 618.6"/><circle cx="1121" cy="615.2" r="1.4" fill="#e8232e" stroke="none"/><path d="M1163.6 616.9 H1168 Q1170.3 616.9 1170.3 619.2 V625.4 L1167 628.7 H1161.1 Q1158.8 628.7 1158.8 626.4 V621.6"/><path d="M1170.2 625.6 H1168.4 Q1167.1 625.6 1167.1 626.9 V628.5" stroke-width="1.2"/><circle cx="1158.3" cy="616.1" r="1.9" fill="#23262f" stroke="none"/><path d="M1159.6 617.5 L1162.4 620.6"/><path d="M1205.3 616.9 H1210.6 L1206 626.9 H1213.1 C1214 624.2 1214.5 621.6 1214.9 619"/><circle cx="1216" cy="615.9" r="0.6" fill="#23262f"/><path d="M1214.4 625.6 L1219.2 618.7 L1222.5 625.2 Q1222.8 626.3 1221.6 626.2 L1215.8 625.5"/><circle cx="1263.7" cy="622.5" r="6.9"/><path d="M1263.4 619.6 V623.2 H1266.9"/><path d="M1255.3 617.6 A5.4 5.4 0 0 1 1258.6 614.4 M1268.8 614.4 A5.4 5.4 0 0 1 1272.1 617.6" stroke-width="2.1"/><path d="M1309.2 616.2 A6.7 6.7 0 1 1 1306.6 624"/><path d="M1303.8 622.6 L1306.7 624.4 L1308.2 621.4"/><path d="M1312.3 618.9 V623 H1315.8"/></svg>
<svg class="a" style="left:1344px;top:614px" width="16" height="15" viewBox="0 0 16 15" fill="none" stroke="#a2a5b0" stroke-width="1.2" stroke-linejoin="round"><rect x="1.2" y="4.6" width="11.6" height="8.8" rx="1.8"/><path d="M2.6 4.4 V3.4 C2.6 2.2 3.4 1.4 4.6 1.4 H12.4 C13.7 1.4 14.6 2.3 14.6 3.6 V9.6 C14.6 10.6 14 11.4 13 11.6"/><path d="M3.6 7.6 H10.4 M3.6 10.4 H10.4"/></svg>
<svg class="a" style="left:779px;top:49px" width="14" height="22" viewBox="0 0 14 22"><path d="M1.2 1.2 V17.4 L5 13.8 L7.8 20.2 L10.2 19.2 L7.4 12.9 H12.6 Z" fill="#fff" stroke="#111" stroke-width="1.1" stroke-linejoin="round"/></svg>
</body>
</html>
